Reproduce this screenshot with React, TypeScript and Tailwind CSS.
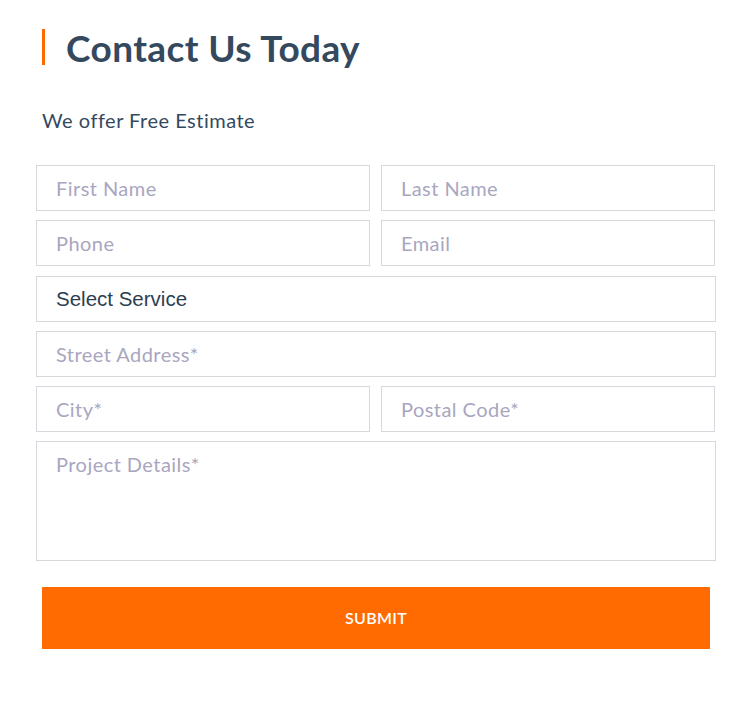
import React from "react";

const inputCls =
  "h-[46px] w-full border border-[#d7d7dd] bg-white px-[19px] text-[20px] tracking-[0.45px] text-[#2c3e50] placeholder:text-[#a9a6bf] outline-none font-['Lato',sans-serif]";

export default function App() {
  return (
    <div className="w-[745px] h-[704px] bg-white font-['Lato',sans-serif]">
      <div className="pt-[29px] pl-[42px] pr-[29px]">
        <div className="flex items-center border-l-[3px] border-[#ff6a00] h-[36px] pl-[21px]">
          <h1 className="text-[37px] font-bold text-[#34495e] leading-none tracking-[0.4px]">
            Contact Us Today
          </h1>
        </div>
        <p className="mt-[43px] text-[20px] tracking-[0.5px] text-[#34495e] leading-[24px]">We offer Free Estimate</p>
      </div>
      <form className="mt-[33px] pl-[36px] pr-[29px] flex flex-col gap-[9px]">
        <div className="grid grid-cols-2 gap-[11px] pr-[1px]">
          <input className={inputCls} placeholder="First Name" />
          <input className={inputCls} placeholder="Last Name" />
        </div>
        <div className="grid grid-cols-2 gap-[11px] pr-[1px]">
          <input className={inputCls} placeholder="Phone" />
          <input className={inputCls} placeholder="Email" />
        </div>
        <div className="mt-[1px] h-[46px] w-full border border-[#d7d7dd] px-[19px] flex items-center text-[20.5px] text-[#2c3e50] font-['Liberation_Sans',sans-serif]">
          Select Service
        </div>
        <input className={inputCls} placeholder="Street Address*" />
        <div className="grid grid-cols-2 gap-[11px] pr-[1px]">
          <input className={inputCls} placeholder="City*" />
          <input className={inputCls} placeholder="Postal Code*" />
        </div>
        <textarea
          className="h-[120px] w-full resize-none border border-[#d7d7dd] px-[19px] pt-[7px] text-[20px] tracking-[0.45px] text-[#2c3e50] placeholder:text-[#a9a6bf] outline-none font-['Lato',sans-serif]"
          placeholder="Project Details*"
        />
      </form>
      <div className="mt-[26px] pl-[42px] pr-[35px]">
        <button className="h-[62px] w-full bg-[#ff6b00] text-white text-[16px] font-semibold tracking-[0.3px]">
          SUBMIT
        </button>
      </div>
    </div>
  );
}
